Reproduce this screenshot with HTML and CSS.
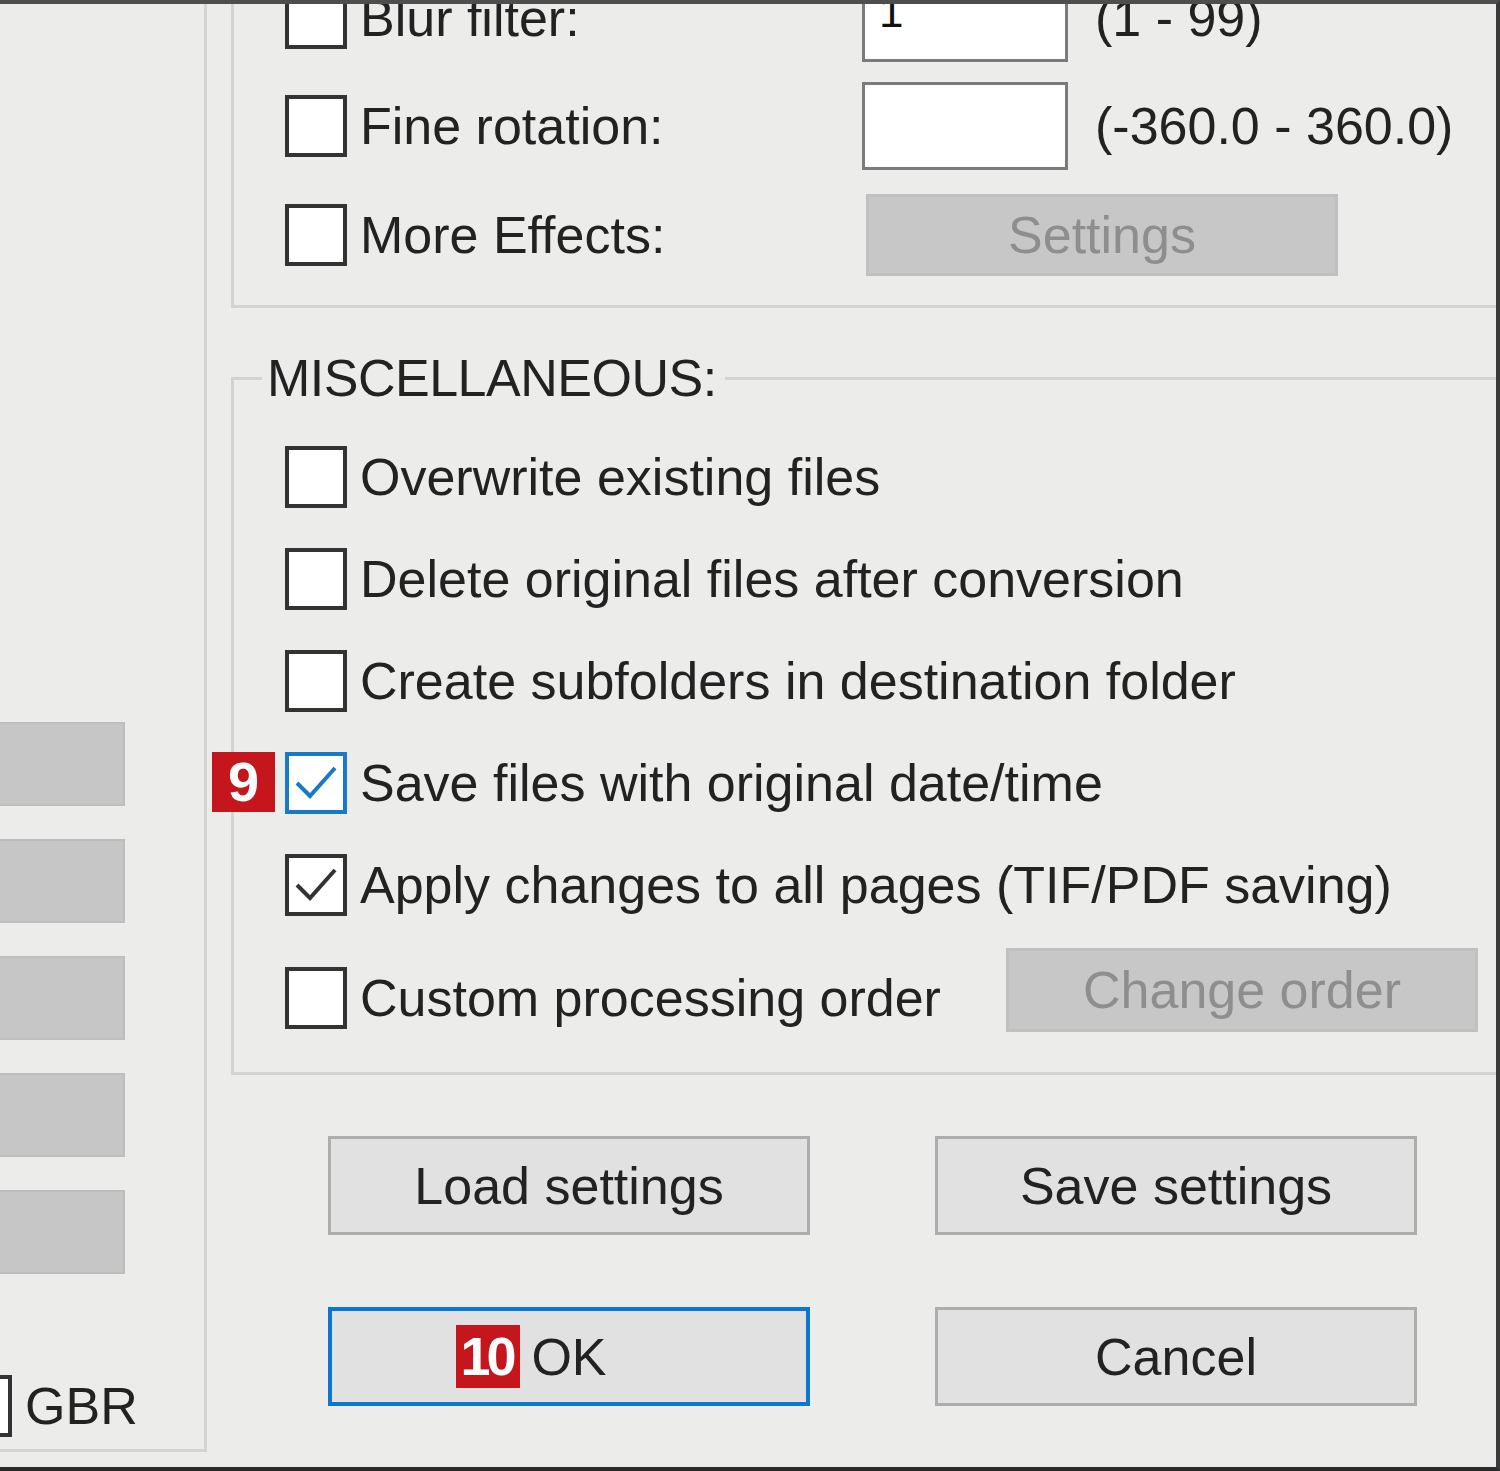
FILE: index.html
```html
<!DOCTYPE html>
<html lang="en">
<head>
	<meta charset="UTF-8">
	<title>Batch conversion - options</title>
	<link rel="stylesheet" href="styles.css">
</head>
<body>

	<div class="dialog">

		<aside class="left-col">
			<div class="bars">
				<div class="bar"></div>
				<div class="bar"></div>
				<div class="bar"></div>
				<div class="bar"></div>
				<div class="bar"></div>
			</div>
			<label class="check gbr"><span class="box"></span><span>GBR</span></label>
		</aside>

		<main class="right-col">

			<!-- effects group, top is scrolled out of view -->
			<div class="group effects">
				<div class="row">
					<label class="check w-input"><span class="box"></span><span>Blur filter:</span></label>
					<input class="num" type="text" value="1">
					<span class="range">(1 - 99)</span>
				</div>
				<div class="row">
					<label class="check w-input"><span class="box"></span><span>Fine rotation:</span></label>
					<input class="num" type="text" value="">
					<span class="range">(-360.0 - 360.0)</span>
				</div>
				<div class="row row-more">
					<label class="check w-input"><span class="box"></span><span>More Effects:</span></label>
					<button class="btn disabled small">Settings</button>
				</div>
			</div>

			<fieldset class="group misc">
				<legend>MISCELLANEOUS:</legend>
				<div class="rows">
					<div class="row">
						<label class="check"><span class="box"></span><span>Overwrite existing files</span></label>
					</div>
					<div class="row">
						<label class="check"><span class="box"></span><span>Delete original files after conversion</span></label>
					</div>
					<div class="row">
						<label class="check"><span class="box"></span><span>Create subfolders in destination folder</span></label>
					</div>
					<div class="row">
						<span class="badge badge-9">9</span>
						<label class="check"><span class="box focus"><svg viewBox="0 0 54 54" width="54" height="54"><path d="M8 27 L21 40 L46 12" fill="none" stroke="#1a78c8" stroke-width="4"/></svg></span><span>Save files with original date/time</span></label>
					</div>
					<div class="row">
						<label class="check"><span class="box"><svg viewBox="0 0 54 54" width="54" height="54"><path d="M8 27 L21 40 L46 12" fill="none" stroke="#333" stroke-width="4"/></svg></span><span>Apply changes to all pages (TIF/PDF saving)</span></label>
					</div>
					<div class="row row-custom">
						<label class="check w-btn"><span class="box"></span><span>Custom processing order</span></label>
						<button class="btn disabled">Change order</button>
					</div>
				</div>
			</fieldset>

			<div class="actions">
				<button class="btn">Load settings</button>
				<button class="btn">Save settings</button>
				<button class="btn default"><span class="ok">OK<span class="badge badge-10">10</span></span></button>
				<button class="btn">Cancel</button>
			</div>

		</main>
	</div>

</body>
</html>
```

FILE: styles.css
```css
html, body {
	margin: 0;
	padding: 0;
}
body {
	background-color: #ecedeb;
	font-family: "Liberation Sans", Arial, sans-serif;
	font-size: 52px;
	color: #222;
}
.dialog {
	width: 1500px;
	height: 1471px;
	box-sizing: border-box;
	border-top: 4px solid #4e4e4e;
	border-right: 4px solid #3a3a3a;
	border-bottom: 4px solid #2a2a2a;
	background-color: #ecedeb;
	overflow: hidden;
	display: flex;
	align-items: flex-start;
}

/* left panel */
.left-col {
	width: 207px;
	height: 1448px;
	flex-shrink: 0;
	box-sizing: border-box;
	border-right: 3px solid #d3d4d2;
	border-bottom: 3px solid #d3d4d2;
	padding-top: 718px;
	display: flex;
	flex-direction: column;
}
.bars {
	display: flex;
	flex-direction: column;
	gap: 33px;
}
.bar {
	width: 250px;
	height: 84px;
	margin-left: -125px;
	box-sizing: border-box;
	background-color: #c5c6c5;
	border: 2px solid #bdbebd;
}
.gbr {
	margin-top: 101px;
	margin-left: -50px;
}

/* checkboxes */
.check {
	display: flex;
	align-items: center;
	gap: 13px;
	line-height: 62px;
	white-space: nowrap;
	flex-shrink: 0;
}
.box {
	width: 62px;
	height: 62px;
	flex-shrink: 0;
	box-sizing: border-box;
	border: 4px solid #333;
	background-color: #fff;
	display: flex;
	align-items: center;
	justify-content: center;
}
.box.focus {
	border-color: #1a78c8;
}
.w-input {
	width: 577px;
}
.w-btn {
	width: 721px;
}

/* right side */
.right-col {
	flex: 1;
	min-width: 0;
	display: flex;
	flex-direction: column;
}
.group {
	border: 3px solid #d3d4d2;
	margin: 0 -40px 0 24px;
}
.row {
	display: flex;
	align-items: center;
	position: relative;
}
.effects {
	margin-top: -53px;
	padding: 20px 0 29px 51px;
	display: flex;
	flex-direction: column;
	gap: 20px;
}
.row-more {
	margin-top: 4px;
}
.num {
	width: 206px;
	height: 88px;
	box-sizing: border-box;
	border: 3px solid #7b7b7b;
	background-color: #fff;
	font: inherit;
	font-size: 44px;
	color: #111;
	padding: 0 0 12px 14px;
	margin: 0;
	outline: none;
}
.range {
	margin-left: 27px;
	white-space: nowrap;
}

.misc {
	margin-top: 40px;
	padding: 38px 0 40px 28px;
	min-width: 0;
}
.misc legend {
	padding: 0 8px 0 5px;
	line-height: 60px;
	letter-spacing: -0.5px;
}
.rows {
	display: flex;
	flex-direction: column;
	gap: 40px;
	padding-left: 23px;
}
.row-custom {
	margin-top: -8px;
	align-items: flex-end;
}
.row-custom .check {
	margin-bottom: 3px;
}

/* buttons */
.btn {
	font: inherit;
	color: #222;
	background-color: #e1e1e1;
	border: 3px solid #adadad;
	height: 99px;
	padding: 0;
	margin: 0;
	box-sizing: border-box;
	white-space: nowrap;
}
.btn.disabled {
	width: 472px;
	height: 84px;
	background-color: #c6c7c6;
	border-color: #bfc0bf;
	color: #8e8e8e;
}
.btn.small {
	height: 82px;
	margin-left: 4px;
}
.btn.default {
	border: 4px solid #0a78d2;
}
.actions {
	margin: 61px 0 0 121px;
	display: grid;
	grid-template-columns: 482px 482px;
	column-gap: 125px;
	row-gap: 72px;
}
.ok {
	position: relative;
	display: inline-block;
	line-height: 62px;
}

/* red step markers */
.badge {
	position: absolute;
	background-color: #c4161c;
	color: #fff;
	font-weight: bold;
	text-align: center;
}
.badge-9 {
	left: -73px;
	top: 0;
	width: 63px;
	height: 60px;
	line-height: 60px;
	font-size: 56px;
}
.badge-10 {
	right: calc(100% + 11px);
	top: -1px;
	width: 64px;
	height: 63px;
	line-height: 63px;
	font-size: 54px;
	letter-spacing: -4px;
	text-indent: -4px;
}
```
